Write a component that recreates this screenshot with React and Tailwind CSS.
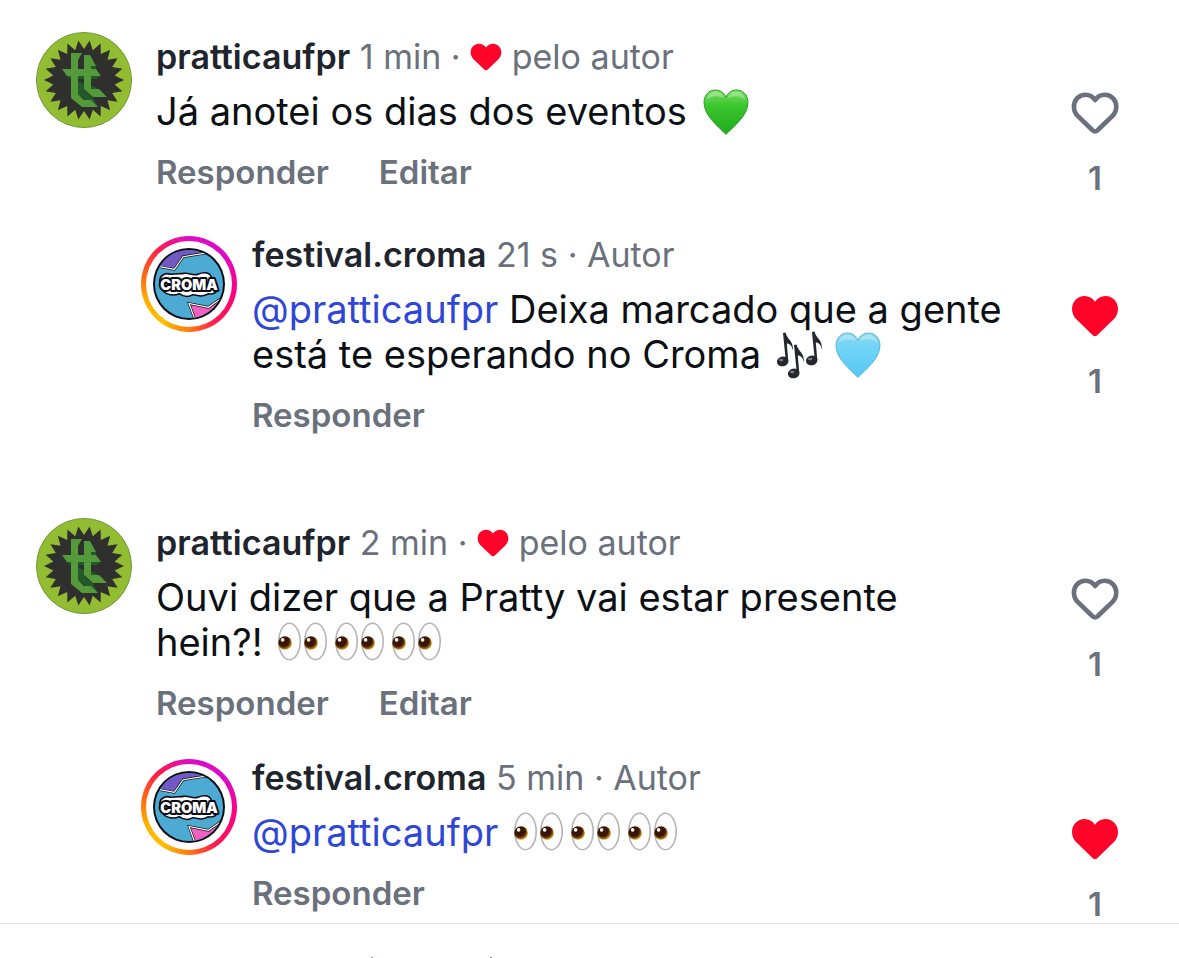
import React, { useState } from 'react';

const HEART = 'M24 44 C22.8 44 22 43.3 21 42.4 L5.6 27.6 C2.4 24.4 1 20.9 1 17 C1 9.6 6.6 4 13.4 4 C17.8 4 21.6 6.2 24 9.8 C26.4 6.2 30.2 4 34.6 4 C41.4 4 47 9.6 47 17 C47 20.9 45.6 24.4 42.4 27.6 L27 42.4 C26 43.3 25.2 44 24 44 Z';

// 22-pointed starburst centred in a 96x96 box
const burst = Array.from({ length: 44 }, (_, i) => {
  const r = i % 2 ? 40 : 31;
  const a = (i * Math.PI) / 22;
  return `${(48 + r * Math.sin(a)).toFixed(2)},${(48 - r * Math.cos(a)).toFixed(2)}`;
}).join(' ');

const PratticaAvatar = () => (
  <svg viewBox="0 0 96 96" className="size-24 shrink-0" role="img" aria-label="pratticaufpr">
    <circle cx="48" cy="48" r="47.5" fill="#92bd33" stroke="#6f9a3a" />
    <polygon points={burst} fill="#2f302d" />
    <g fill="#235a2b">
      <path d="M42 49 L48 52 V58 L57 66 L62 75 L54 71 L42 62 Z" />
      <path d="M55 27 L60 35 V38 H55 Z" />
      <path d="M31 44 H64 L61 47 H34 Z" />
      <path d="M62 57 L57 54 H55 V57 Z" />
    </g>
    <g fill="#559a3a">
      <path d="M35 21 H46 L42 28 V62 L48 68 H55 L62 75 H46 L35 66 Z" />
      <path d="M48 23 H54 L60 34 H55 V57 H63 L71 65 H57 L48 57 Z" />
      <path d="M26 37 H60 L65 44 H31 Z" />
    </g>
  </svg>
);

const CromaAvatar = () => (
  <div className="mt-px size-24 shrink-0 rounded-full bg-[conic-gradient(#dd0bc8,#dd0bc8_50deg,#ff0080_100deg,#ff1a50_145deg,#ff7a10_180deg,#ffc000_215deg,#ffb000_250deg,#ff6a10_280deg,#ff1a50_320deg,#dd0bc8)] p-[5px]">
    <div className="rounded-full bg-white p-[7px]">
      <svg viewBox="0 0 74 74" className="block w-full" role="img" aria-label="festival.croma">
        <defs>
          <clipPath id="disc">
            <circle cx="37" cy="37" r="35" />
          </clipPath>
        </defs>
        <circle cx="37" cy="37" r="37" fill="#0b0b14" />
        <g clipPath="url(#disc)">
          <rect width="74" height="74" fill="#4daad3" />
          <path d="M0 18 L22 22 L31 9 L56 5 L40 -4 H0 Z" fill="#7158c4" stroke="#111" strokeWidth="2.6" />
          <path d="M0 18 L22 22 L31 9 L56 5" fill="none" stroke="#fff" strokeWidth="1.2" />
          <path d="M37 57 L57 61 L74 49 V76 H44 Z" fill="#f05fc2" stroke="#111" strokeWidth="2.6" />
          <path d="M44 76 L37 57 L57 61 L74 49" fill="none" stroke="#fff" strokeWidth="1.2" />
        </g>
        <path
          d="M7 36 C6 28 13 25 18 27 C24 26 29 27 32 26 C37 25 41 29 46 27 C51 25 58 24 60 30 C61 34 67 35 66 41 C67 46 61 48 57 47 C52 51 45 49 41 48 C36 51 31 50 27 47 C20 50 8 48 7 36 Z"
          fill="#fff"
          stroke="#0b0b14"
          strokeWidth="1.6"
        />
        <text
          x="37"
          y="43"
          textAnchor="middle"
          fontSize="15"
          fontWeight="900"
          fill="#fff"
          stroke="#0b0b14"
          strokeWidth="4"
          strokeLinejoin="round"
          paintOrder="stroke"
        >
          CROMA
        </text>
      </svg>
    </div>
  </div>
);

const HeartEmoji = ({ id, top, mid, bottom, edge, label }) => (
  <svg viewBox="0 0 48 48" className="-my-1 inline-block size-12 align-[-7px]" role="img" aria-label={label}>
    <defs>
      <linearGradient id={id} x1="0" y1="0" x2="0" y2="1">
        <stop offset="0" stopColor={top} />
        <stop offset="0.35" stopColor={mid} />
        <stop offset="1" stopColor={bottom} />
      </linearGradient>
    </defs>
    <path
      d="M24 46.5 C17 39 2 28 2 14.5 C2 7 7 2 13.5 2 C18.5 2 22.5 5 24 9.5 C25.5 5 29.5 2 34.5 2 C41 2 46 7 46 14.5 C46 28 31 39 24 46.5 Z"
      fill={`url(#${id})`}
      stroke={edge}
      strokeWidth="1"
    />
    <path d="M4.5 12 C6 5.5 10 3.8 13.5 3.8 C17.5 3.8 20.8 6 22 10 C15 7 9 8 4.5 12 Z" fill="#fff" opacity="0.3" />
    <path d="M26 10 C27.2 6 30.5 3.8 34.5 3.8 C38 3.8 42 5.5 43.5 12 C39 8 33 7 26 10 Z" fill="#fff" opacity="0.3" />
  </svg>
);

const GreenHeart = () => (
  <HeartEmoji id="green" top="#7bdc63" mid="#3cc62f" bottom="#1faa1c" edge="#2ea32a" label="💚" />
);

const BlueHeart = () => (
  <HeartEmoji id="blue" top="#8bd9f0" mid="#6fd3f6" bottom="#55c8f5" edge="#62b7d6" label="🩵" />
);

const Notes = () => (
  <svg viewBox="0 0 48 48" className="-my-1 inline-block size-12 align-[-7px]" role="img" aria-label="🎶">
    {[[1, 0], [12, 12], [30, -1]].map(([x, y]) => (
      <g key={x} transform={`translate(${x} ${y})`}>
        <ellipse cx="5.6" cy="30.4" rx="5.8" ry="4.8" transform="rotate(-12 6 30)" fill="#26272c" />
        <path
          d="M6 2 L8.6 1.4 C9.5 8 17.5 10 15.6 20 C15.4 14.5 12.5 12.4 9.8 12.4 L11.3 30 L8.8 30 Z"
          fill="#26272c"
        />
        <ellipse cx="4.2" cy="29" rx="2.2" ry="1.2" fill="#777b84" />
      </g>
    ))}
  </svg>
);

const Eyes = () => (
  <svg viewBox="0 0 57 48" className="-my-1 inline-block h-12 w-[57px] align-[-7px]" role="img" aria-label="👀">
    <defs>
      <radialGradient id="iris" cx="0.42" cy="0.38" r="0.62">
        <stop offset="0.6" stopColor="#3a1503" />
        <stop offset="0.8" stopColor="#8a5a0c" />
        <stop offset="1" stopColor="#d0a030" />
      </radialGradient>
    </defs>
    {[0, 26].map(x => (
      <g key={x} transform={`translate(${x} 0)`}>
        <ellipse cx="12.5" cy="22.5" rx="10.7" ry="18.2" fill="#fdfdfd" stroke="#b5b5b8" strokeWidth="1.6" />
        <circle cx="8" cy="24" r="6.8" fill="url(#iris)" />
        <circle cx="5.6" cy="20.9" r="1.8" fill="#fff" />
      </g>
    ))}
  </svg>
);

const LikeButton = ({ liked: initial, count }) => {
  const [liked, setLiked] = useState(initial);

  return (
    <button
      type="button"
      aria-label="Curtir"
      aria-pressed={liked}
      onClick={() => setLiked(!liked)}
      className="flex shrink-0 flex-col items-center gap-[19px] self-start pt-[57px]"
    >
      <svg viewBox="0 0 48 48" className="size-12">
        {liked ? (
          <path d={HEART} fill="#ff0329" />
        ) : (
          <path d={HEART} fill="none" stroke="#6a717c" strokeWidth="5" strokeLinejoin="round" transform="translate(2 2) scale(0.92)" />
        )}
      </svg>
      <span className="text-[33px] leading-[44px] font-semibold text-[#6a717c]">{count}</span>
    </button>
  );
};

const Comment = ({ reply, user, time, children, actions, liked }) => (
  <article className={reply ? 'flex gap-[15px] pl-[105px]' : 'flex gap-6'}>
    {reply ? <CromaAvatar /> : <PratticaAvatar />}
    <div className={reply ? 'min-w-0 flex-1 pr-9' : 'min-w-0 flex-1 pt-[5px] pr-9'}>
      <p className="text-[34px] leading-10 text-[#6a717c]">
        <a href={`#${user}`} className="font-semibold text-[#20242c]">{user}</a>{' '}
        <time>{time}</time> ·{' '}
        {reply ? (
          'Autor'
        ) : (
          <>
            <svg viewBox="0 0 48 48" className="inline-block size-8 align-[-4px]" role="img" aria-label="Curtido">
              <path d={HEART} fill="#ff0329" />
            </svg>{' '}
            pelo autor
          </>
        )}
      </p>
      <p className="mt-3 text-[38px] leading-[45px] text-[#0c1014]">{children}</p>
      <div className="mt-[18px] flex gap-[50px]">
        {actions.map(action => (
          <button key={action} type="button" className="text-[33px] leading-10 font-semibold text-[#6a717c]">
            {action}
          </button>
        ))}
      </div>
    </div>
    <LikeButton liked={liked} count={1} />
  </article>
);

const Mention = () => (
  <a href="#pratticaufpr" className="text-[#2f47d6]">@pratticaufpr</a>
);

const Emojis = ({ children }) => <span className="ml-1 whitespace-nowrap">{children}</span>;

const App = () => (
  <div className="flex h-screen flex-col bg-white font-['Inter',sans-serif]">
    <main className="min-h-0 flex-1 overflow-hidden pt-8 pr-[60px] pl-9">
      <section className="flex flex-col gap-[35px]">
        <Comment user="pratticaufpr" time="1 min" actions={['Responder', 'Editar']} liked={false}>
          Já anotei os dias dos eventos <Emojis><GreenHeart /></Emojis>
        </Comment>
        <Comment reply user="festival.croma" time="21 s" actions={['Responder']} liked>
          <Mention /> Deixa marcado que a gente está te esperando no Croma{' '}
          <Emojis><Notes /> <BlueHeart /></Emojis>
        </Comment>
      </section>
      <section className="mt-[83px] flex flex-col gap-[35px]">
        <Comment user="pratticaufpr" time="2 min" actions={['Responder', 'Editar']} liked={false}>
          Ouvi dizer que a Pratty vai estar presente hein?!{' '}
          <Emojis><Eyes /><Eyes /><Eyes /></Emojis>
        </Comment>
        <Comment reply user="festival.croma" time="5 min" actions={['Responder']} liked>
          <Mention /> <Emojis><Eyes /><Eyes /><Eyes /></Emojis>
        </Comment>
      </section>
    </main>
    <footer className="flex h-[35px] shrink-0 items-end gap-[117px] border-t border-[#e4e4e7] bg-white pl-[371px]">
      <span className="h-px w-0.5 bg-[#b08a90]" />
      <span className="h-px w-0.5 bg-[#8a8d94]" />
    </footer>
  </div>
);

export default App;
